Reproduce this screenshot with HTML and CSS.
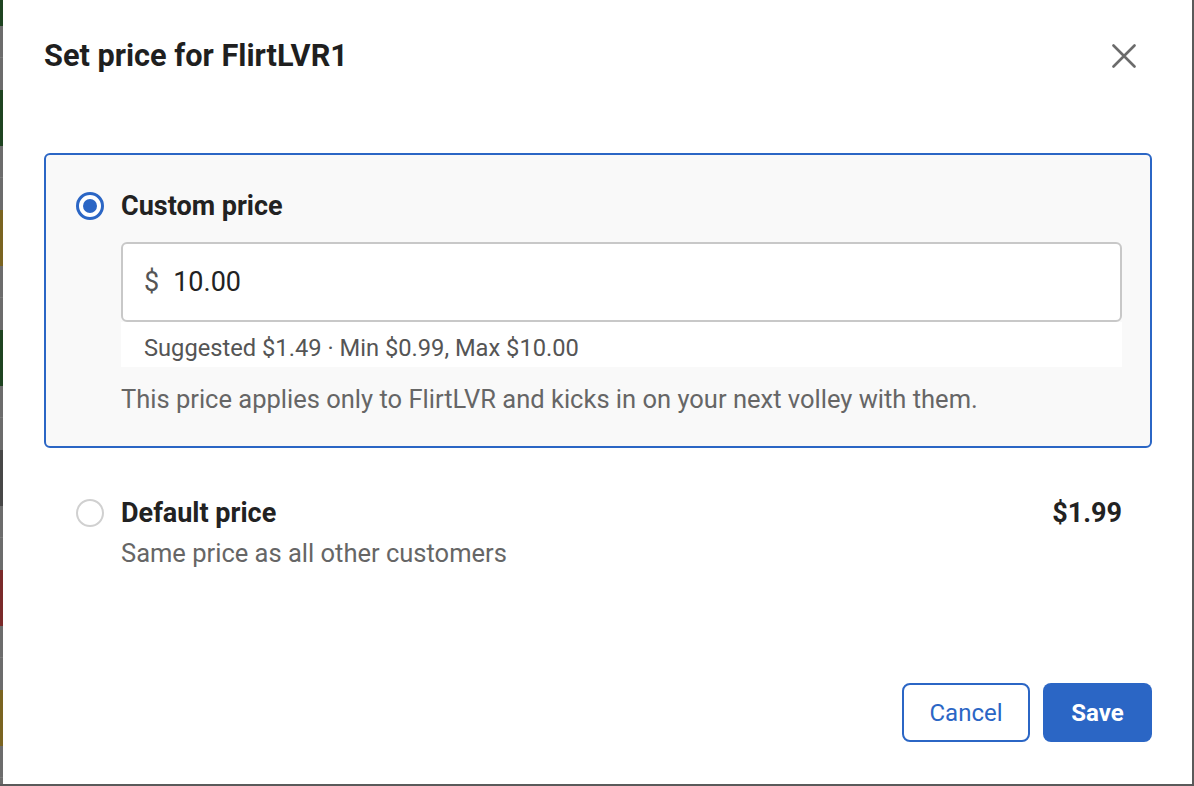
FILE: index.html
```html
<!DOCTYPE html>
<html lang="en">
<head>
<meta charset="utf-8">
<title>Set price</title>
<link rel="stylesheet" href="styles.css">
</head>
<body>
<div class="page">
  <aside class="backdrop">
    <div class="bd-list">
      <div class="bd-row"><span class="bd-avatar green"></span></div>
      <div class="bd-row"><span class="bd-avatar green"></span></div>
      <div class="bd-row"><span class="bd-avatar yellow"></span></div>
      <div class="bd-row"><span class="bd-avatar green"></span></div>
      <div class="bd-row"><span class="bd-avatar grey"></span></div>
      <div class="bd-row"><span class="bd-avatar red"></span></div>
      <div class="bd-row"><span class="bd-avatar yellow"></span></div>
    </div>
  </aside>

  <section class="modal" role="dialog" aria-labelledby="modal-title">
    <header class="modal-header">
      <h1 id="modal-title" class="modal-title">Set price for FlirtLVR1</h1>
      <button class="close-btn" aria-label="Close">
        <svg width="24" height="24" viewBox="0 0 24 24" aria-hidden="true">
          <path d="M1.5 1.5 L22.5 22.5 M22.5 1.5 L1.5 22.5" stroke="#6b6b6b" stroke-width="2.6" stroke-linecap="round" fill="none"/>
        </svg>
      </button>
    </header>

    <div class="option option-selected">
      <div class="option-row">
        <span class="radio radio-on"><span class="radio-dot"></span></span>
        <span class="option-label">Custom price</span>
      </div>
      <div class="option-body">
        <div class="price-input">
          <span class="currency">$</span>
          <span class="amount">10.00</span>
        </div>
        <div class="helper">Suggested $1.49 · Min $0.99, Max $10.00</div>
        <p class="desc">This price applies only to FlirtLVR and kicks in on your next volley with them.</p>
      </div>
    </div>

    <div class="option option-default">
      <div class="option-row">
        <span class="radio"></span>
        <span class="option-label">Default price</span>
        <span class="option-price">$1.99</span>
      </div>
      <div class="option-body">
        <p class="desc desc-default">Same price as all other customers</p>
      </div>
    </div>

    <footer class="modal-footer">
      <button class="btn btn-outline">Cancel</button>
      <button class="btn btn-primary">Save</button>
    </footer>
  </section>
</div>
</body>
</html>
```

FILE: styles.css
```css
* { box-sizing: border-box; }

html, body {
  margin: 0;
  padding: 0;
}

body {
  background: #5a5a5a;
  font-family: Roboto, "Liberation Sans", Arial, sans-serif;
  width: 1194px;
  height: 786px;
  overflow: hidden;
}

.page {
  display: flex;
  align-items: flex-start;
  height: 786px;
}

/* page behind the dialog, only a sliver visible */
.backdrop {
  width: 3px;
  height: 784px;
  overflow: hidden;
  background: #6c6c6c;
  flex: none;
}

.bd-list {
  margin-top: -62px;
  display: flex;
  flex-direction: column;
}

.bd-row {
  height: 120px;
  display: flex;
  align-items: center;
  border-bottom: 1px solid #7a7a7a;
}

.bd-avatar {
  width: 56px;
  height: 56px;
  border-radius: 50%;
  margin-left: -27px;
  flex: none;
}
.bd-avatar.green { background: #1f4421; }
.bd-avatar.yellow { background: #7a6421; }
.bd-avatar.grey { background: #474747; }
.bd-avatar.red { background: #7a2a2a; }

/* dialog */
.modal {
  width: 1189px;
  height: 784px;
  background: #ffffff;
  padding: 36px 40px 42px 41px;
  display: flex;
  flex-direction: column;
  flex: none;
}

.modal-header {
  display: flex;
  align-items: center;
  justify-content: space-between;
  height: 40px;
}

.modal-title {
  margin: 0;
  font-size: 30.7px;
  line-height: 40px;
  font-weight: 700;
  color: #1f1f1f;
}

.close-btn {
  width: 24px;
  height: 24px;
  padding: 0;
  border: 0;
  background: none;
  margin-right: 16px;
  display: flex;
}

.option {
  border: 2px solid transparent;
  border-radius: 6px;
  padding: 35px 28px 32px 30px;
}

.option-selected {
  margin-top: 77px;
  border-color: #2b66c5;
  background: #f9f9f9;
}

.option-default {
  padding-top: 47px;
}

.option-row {
  display: flex;
  align-items: center;
  gap: 17px;
  height: 32px;
}

.radio {
  width: 28px;
  height: 28px;
  border-radius: 50%;
  border: 2.5px solid #d0d0d0;
  background: #ffffff;
  display: flex;
  align-items: center;
  justify-content: center;
  flex: none;
}

.radio-on {
  border: 3px solid #2b66c5;
}

.radio-dot {
  width: 14px;
  height: 14px;
  border-radius: 50%;
  background: #2b66c5;
}

.option-label {
  font-size: 27px;
  font-weight: 700;
  color: #222222;
  line-height: 32px;
}

.option-price {
  margin-left: auto;
  font-size: 27px;
  font-weight: 700;
  color: #222222;
}

.option-body {
  padding-left: 45px;
}

.price-input {
  margin-top: 20px;
  height: 80px;
  background: #ffffff;
  border: 2px solid #c8c8c8;
  border-radius: 6px;
  display: flex;
  align-items: center;
  padding-left: 21px;
  gap: 14px;
  font-size: 27px;
}

.currency {
  color: #555555;
}

.amount {
  color: #222222;
}

.helper {
  background: #ffffff;
  padding: 12px 23px 5px;
  font-size: 23.7px;
  line-height: 28px;
  color: #555555;
}

.desc {
  margin: 17px 0 0;
  font-size: 25.5px;
  line-height: 30px;
  color: #666666;
}

.desc-default {
  margin-top: 9px;
}

.modal-footer {
  margin-top: auto;
  display: flex;
  justify-content: flex-end;
  gap: 13px;
}

.btn {
  height: 59px;
  border-radius: 8px;
  font-family: Roboto, "Liberation Sans", Arial, sans-serif;
  font-size: 24px;
  cursor: pointer;
  padding: 0;
}

.btn-outline {
  width: 128px;
  border: 2px solid #2b66c5;
  background: #ffffff;
  color: #2b66c5;
  font-weight: 400;
}

.btn-primary {
  width: 109px;
  border: 0;
  background: #2b66c5;
  color: #ffffff;
  font-weight: 700;
}
```
